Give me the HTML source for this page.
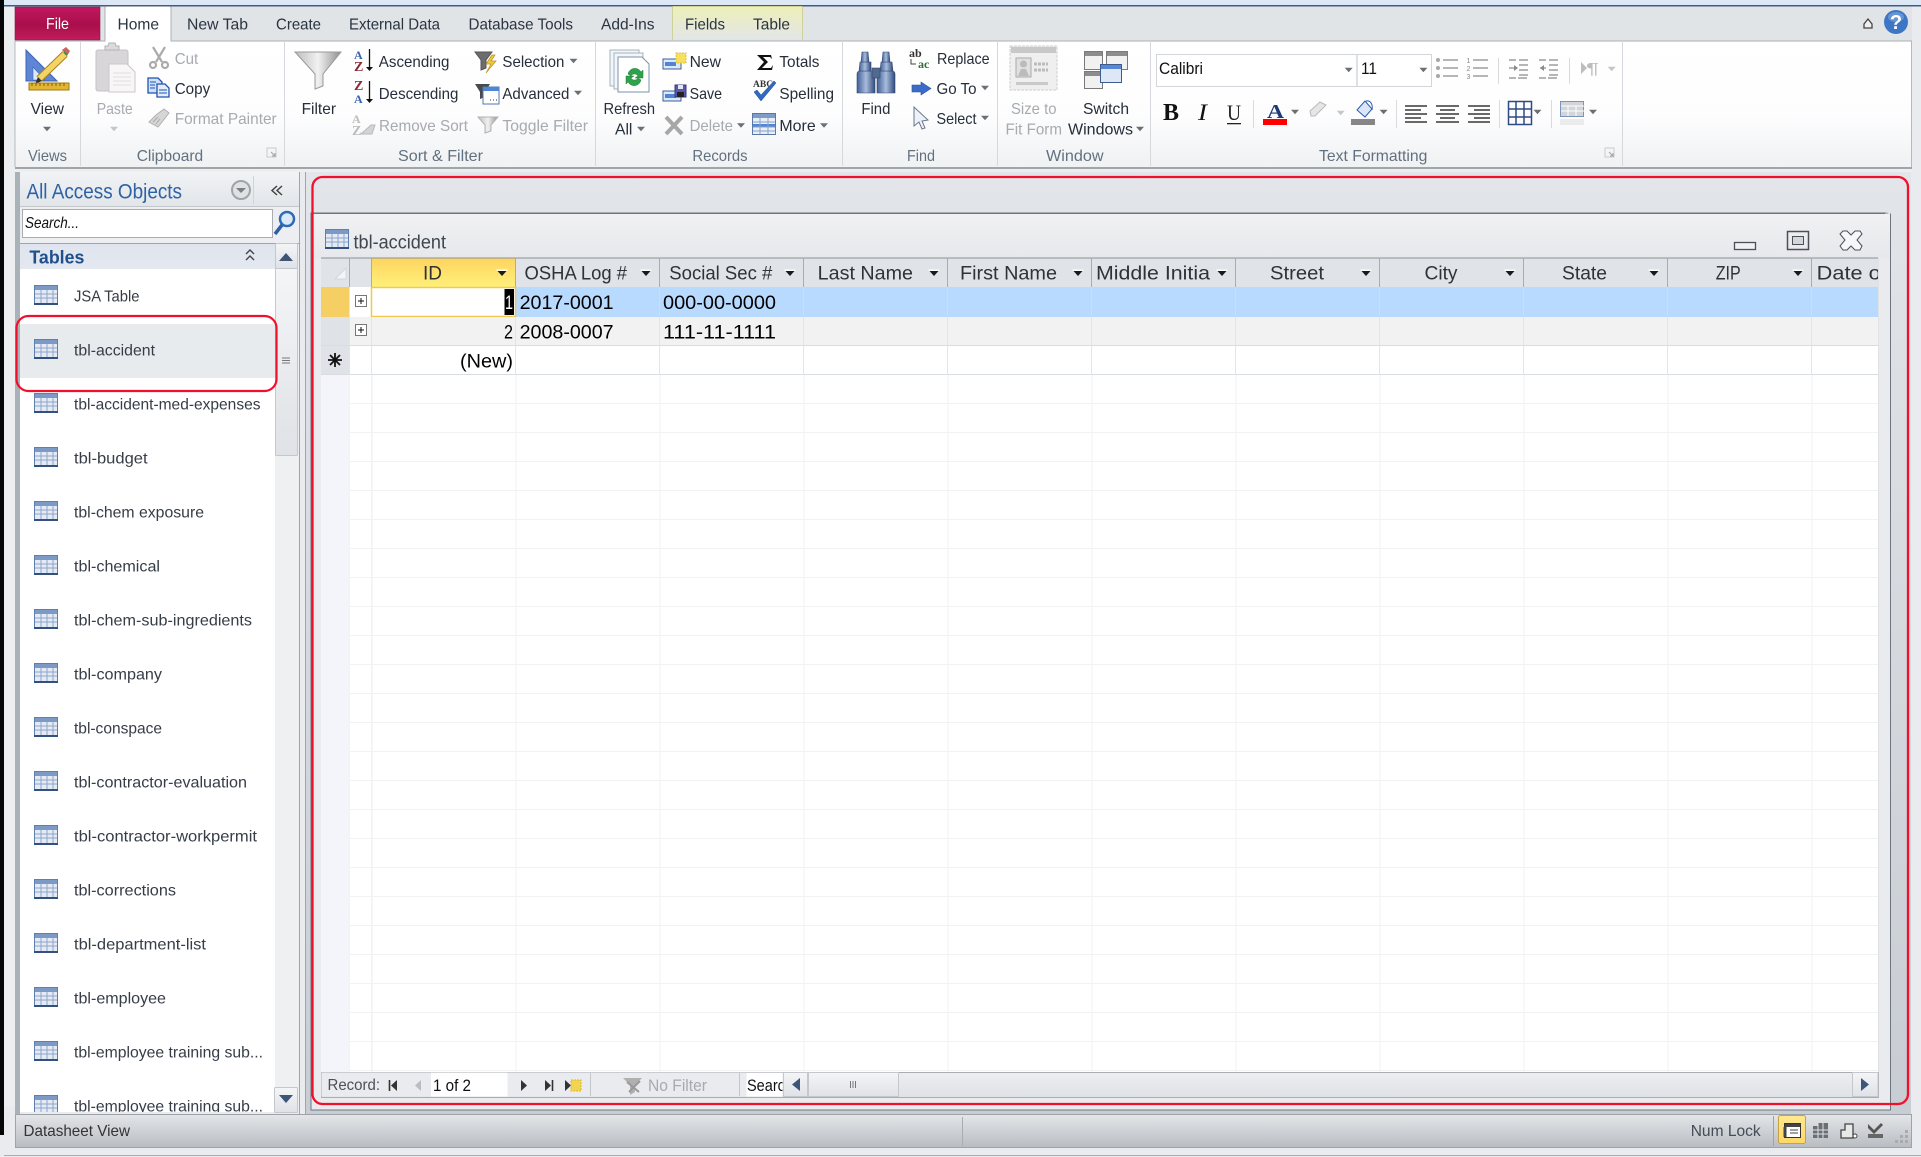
<!DOCTYPE html>
<html><head><meta charset="utf-8"><title>tbl-accident</title>
<style>
html,body{margin:0;padding:0;background:#e9ebee;width:1921px;height:1157px;overflow:hidden}
svg{display:block}
text{font-family:"Liberation Sans",sans-serif;white-space:pre}
.r{font-size:16px;fill:#262e3a}
.g{font-size:16px;fill:#a7aaae}
.l{font-size:16px;fill:#62717f}
.t{font-size:16px;fill:#2a3541}
.n{font-size:16px;fill:#363d47}
.h{font-size:19.5px;fill:#2e3338}
.c{font-size:19.5px;fill:#000}
.s{font-family:"Liberation Serif",serif;font-weight:bold}
</style></head><body>
<svg xmlns="http://www.w3.org/2000/svg" width="1921" height="1157" viewBox="0 0 1921 1157">
<defs>
<linearGradient id="rib" x1="0" y1="0" x2="0" y2="1"><stop offset="0" stop-color="#fff"/><stop offset=".6" stop-color="#fdfdfe"/><stop offset="1" stop-color="#eff1f3"/></linearGradient>
<linearGradient id="file" x1="0" y1="0" x2="0" y2="1"><stop offset="0" stop-color="#c2175e"/><stop offset=".55" stop-color="#a90f4b"/><stop offset="1" stop-color="#c21d5e"/></linearGradient>
<linearGradient id="ctx" x1="0" y1="0" x2="0" y2="1"><stop offset="0" stop-color="#eef0b8"/><stop offset="1" stop-color="#e2e5e8"/></linearGradient>
<linearGradient id="navh" x1="0" y1="0" x2="0" y2="1"><stop offset="0" stop-color="#f1f3f5"/><stop offset="1" stop-color="#e2e5e9"/></linearGradient>
<linearGradient id="tab" x1="0" y1="0" x2="0" y2="1"><stop offset="0" stop-color="#dfe4ee"/><stop offset="1" stop-color="#e4e8f0"/></linearGradient>
<linearGradient id="win" x1="0" y1="0" x2="0" y2="1"><stop offset="0" stop-color="#f0f1f3"/><stop offset="1" stop-color="#e6e8eb"/></linearGradient>
<linearGradient id="idh" x1="0" y1="0" x2="0" y2="1"><stop offset="0" stop-color="#fdd45e"/><stop offset="1" stop-color="#fff07c"/></linearGradient>
<linearGradient id="bg" x1="0" y1="0" x2="0" y2="1"><stop offset="0" stop-color="#e2e5e9"/><stop offset="1" stop-color="#c8cdd3"/></linearGradient>
<linearGradient id="stat" x1="0" y1="0" x2="0" y2="1"><stop offset="0" stop-color="#e3e5e8"/><stop offset="1" stop-color="#b9bdc2"/></linearGradient>
<linearGradient id="nav" x1="0" y1="0" x2="0" y2="1"><stop offset="0" stop-color="#eceef0"/><stop offset="1" stop-color="#dfe2e6"/></linearGradient>
<linearGradient id="btn" x1="0" y1="0" x2="0" y2="1"><stop offset="0" stop-color="#f4f5f7"/><stop offset="1" stop-color="#dfe2e6"/></linearGradient>
<linearGradient id="act" x1="0" y1="0" x2="0" y2="1"><stop offset="0" stop-color="#ffe88e"/><stop offset="1" stop-color="#fdd767"/></linearGradient>
<linearGradient id="fun" x1="0" y1="0" x2="1" y2="0"><stop offset="0" stop-color="#bdbdbd"/><stop offset=".5" stop-color="#f1f1f1"/><stop offset="1" stop-color="#8f8f8f"/></linearGradient>
<linearGradient id="bino" x1="0" y1="0" x2="1" y2="0"><stop offset="0" stop-color="#3f5f96"/><stop offset=".5" stop-color="#a9bcdc"/><stop offset="1" stop-color="#2f4a7c"/></linearGradient>
<pattern id="rows" x="321" y="375" width="1557" height="29" patternUnits="userSpaceOnUse"><path d="M0 28.5H1557" stroke="#f1f2f4" stroke-width="1"/></pattern>
<pattern id="cols" x="371.5" y="0" width="144" height="1157" patternUnits="userSpaceOnUse"><path d="M.5 0V1157" stroke="#f1f2f4" stroke-width="1"/></pattern>
<symbol id="ti" width="24" height="20" viewBox="0 0 24 20" overflow="visible">
<rect x=".5" y=".5" width="23" height="18.5" fill="#e4ebf5" stroke="#5f7fae"/>
<rect x="1" y="1" width="22" height="4" fill="#7d9ac6"/>
<path d="M1 9h22M1 13h22M7 5v14M13 5v14M19 5v14" stroke="#8ea6c9" fill="none"/>
<rect x="0" y="18" width="24" height="2" fill="#34507c"/>
</symbol>
<path id="dn" d="M-4 -2.2h8l-4 4.400z" fill="#6b7077"/>
<path id="dg" d="M-4 -2.2h8l-4 4.400z" fill="#c3c6ca"/>
<g id="ha"><rect x="-5.5" y="-4.5" width="11" height="1.4" fill="#fff"/><path d="M-4.5 -3h9l-4.5 5z" fill="#1a1a1a"/></g>
<g id="rec"><rect x="0" y="0" width="18" height="10" fill="#dfe9f6" stroke="#3a5f9a"/><rect x="2" y="3" width="11" height="4" fill="#4d86d8"/></g>
</defs>

<rect width="1921" height="1157" fill="#e9ebee"/>
<rect x="0" y="0" width="4" height="1135" fill="#050505"/>
<rect x="4" y="0" width="1917" height="5" fill="#dce8f6"/>
<rect x="4" y="5" width="1917" height="1.5" fill="#3d5c88"/>
<rect x="15" y="6.5" width="1897" height="35" fill="#e1e4e7"/>
<rect x="4" y="6.5" width="11" height="1100" fill="#eceef0"/>

<!-- tabs -->
<rect x="15" y="7" width="85" height="33" fill="url(#file)" stroke="#8b1a45" stroke-width=".6"/>
<text x="46" y="29" font-size="16" fill="#fff" textLength="23" lengthAdjust="spacingAndGlyphs">File</text>
<rect x="672.5" y="6.5" width="130" height="34" fill="url(#ctx)"/>
<path d="M672.5 6.5V40M802.5 6.5V40M672.5 6.5H802.5" stroke="#cfd19a" fill="none"/>
<rect x="15" y="41" width="1897" height="126" fill="url(#rib)"/>
<path d="M15 41H1912" stroke="#a9b0b6"/>
<path d="M105 41V8q0-1.500 1.500-1.500H169.500q1.500 0 1.500 1.500V41" fill="#fff" stroke="#a9b0b6"/>
<rect x="105.500" y="39" width="65" height="4" fill="#fff"/>
<path d="M15 41V167M1911.500 41V167" stroke="#b4bac0"/>
<rect x="15" y="167" width="1897" height="2" fill="#a0a5aa"/>
<rect x="15" y="169" width="1897" height="3" fill="#eceef0"/>

<text class="t" x="117.500" y="29.500" textLength="41.500" lengthAdjust="spacingAndGlyphs">Home</text>
<text class="t" x="187" y="29.500" textLength="61" lengthAdjust="spacingAndGlyphs">New Tab</text>
<text class="t" x="276" y="29.500" textLength="45" lengthAdjust="spacingAndGlyphs">Create</text>
<text class="t" x="349" y="29.500" textLength="91" lengthAdjust="spacingAndGlyphs">External Data</text>
<text class="t" x="468.500" y="29.500" textLength="104.500" lengthAdjust="spacingAndGlyphs">Database Tools</text>
<text class="t" x="601" y="29.500" textLength="53.500" lengthAdjust="spacingAndGlyphs">Add-Ins</text>
<text class="t" x="685" y="29.500" textLength="40" lengthAdjust="spacingAndGlyphs">Fields</text>
<text class="t" x="753" y="29.500" textLength="37" lengthAdjust="spacingAndGlyphs">Table</text>

<!-- group separators -->
<path d="M80.500 42V166M284.500 42V166M595.500 42V166M842.500 42V166M997.500 42V166M1150.500 42V166M1622.500 42V166" stroke="#d5d8dc"/>

<!-- ribbon labels -->
<text class="r" x="30.600" y="114" textLength="33.400" lengthAdjust="spacingAndGlyphs">View</text>
<use href="#dn" x="47" y="129"/>
<text class="l" x="28" y="161" textLength="39" lengthAdjust="spacingAndGlyphs">Views</text>
<text class="g" x="96.700" y="114" textLength="36" lengthAdjust="spacingAndGlyphs">Paste</text>
<use href="#dg" x="114" y="129"/>
<text class="g" x="174.700" y="64" textLength="23.500" lengthAdjust="spacingAndGlyphs">Cut</text>
<text class="r" x="174.700" y="94" textLength="35.500" lengthAdjust="spacingAndGlyphs">Copy</text>
<text class="g" x="174.700" y="124" textLength="102" lengthAdjust="spacingAndGlyphs">Format Painter</text>
<text class="l" x="136.700" y="161" textLength="66.500" lengthAdjust="spacingAndGlyphs">Clipboard</text>
<text class="r" x="301.600" y="114" textLength="34.400" lengthAdjust="spacingAndGlyphs">Filter</text>
<text class="r" x="378.800" y="67" textLength="70.600" lengthAdjust="spacingAndGlyphs">Ascending</text>
<text class="r" x="378.800" y="99" textLength="79.600" lengthAdjust="spacingAndGlyphs">Descending</text>
<text class="g" x="379" y="131" textLength="89" lengthAdjust="spacingAndGlyphs">Remove Sort</text>
<text class="r" x="502.400" y="67" textLength="62" lengthAdjust="spacingAndGlyphs">Selection</text>
<use href="#dn" x="573.500" y="61"/>
<text class="r" x="502.400" y="99" textLength="67" lengthAdjust="spacingAndGlyphs">Advanced</text>
<use href="#dn" x="578" y="93"/>
<text class="g" x="502.400" y="131" textLength="85.600" lengthAdjust="spacingAndGlyphs">Toggle Filter</text>
<text class="l" x="398" y="161" textLength="85" lengthAdjust="spacingAndGlyphs">Sort &amp; Filter</text>
<text class="r" x="603.500" y="114" textLength="51.500" lengthAdjust="spacingAndGlyphs">Refresh</text>
<text class="r" x="615" y="134.500" textLength="17.400" lengthAdjust="spacingAndGlyphs">All</text>
<use href="#dn" x="641" y="129"/>
<text class="r" x="689.600" y="67" textLength="31.400" lengthAdjust="spacingAndGlyphs">New</text>
<text class="r" x="689.600" y="99" textLength="32.400" lengthAdjust="spacingAndGlyphs">Save</text>
<text class="g" x="689.600" y="131" textLength="43.400" lengthAdjust="spacingAndGlyphs">Delete</text>
<use href="#dn" x="741" y="125.500"/>
<text class="r" x="779.400" y="67" textLength="40" lengthAdjust="spacingAndGlyphs">Totals</text>
<text class="r" x="779.400" y="99" textLength="54.600" lengthAdjust="spacingAndGlyphs">Spelling</text>
<text class="r" x="779.400" y="131" textLength="36.300" lengthAdjust="spacingAndGlyphs">More</text>
<use href="#dn" x="824" y="125.500"/>
<text class="l" x="692.400" y="161" textLength="55.200" lengthAdjust="spacingAndGlyphs">Records</text>
<text class="r" x="861.400" y="114" textLength="29" lengthAdjust="spacingAndGlyphs">Find</text>
<text class="r" x="937" y="64" textLength="52.600" lengthAdjust="spacingAndGlyphs">Replace</text>
<text class="r" x="936.500" y="94" textLength="40" lengthAdjust="spacingAndGlyphs">Go To</text>
<use href="#dn" x="985" y="88"/>
<text class="r" x="936.500" y="124" textLength="40" lengthAdjust="spacingAndGlyphs">Select</text>
<use href="#dn" x="985" y="118"/>
<text class="l" x="907" y="161" textLength="28" lengthAdjust="spacingAndGlyphs">Find</text>
<text class="g" x="1011" y="114" textLength="45.500" lengthAdjust="spacingAndGlyphs">Size to</text>
<text class="g" x="1005.500" y="134.500" textLength="56.500" lengthAdjust="spacingAndGlyphs">Fit Form</text>
<text class="r" x="1083" y="114" textLength="46" lengthAdjust="spacingAndGlyphs">Switch</text>
<text class="r" x="1068" y="134.500" textLength="65" lengthAdjust="spacingAndGlyphs">Windows</text>
<use href="#dn" x="1140" y="129"/>
<text class="l" x="1046" y="161" textLength="57.500" lengthAdjust="spacingAndGlyphs">Window</text>
<text class="l" x="1319" y="161" textLength="108.400" lengthAdjust="spacingAndGlyphs">Text Formatting</text>

<!-- launchers -->
<g fill="none" stroke="#9aa3ad"><path d="M267 148h9v9h-9z" stroke="#c8ccd0"/><path d="M271 152l4 4M275 153v3h-3"/><path d="M1605 148h9v9h-9z" stroke="#c8ccd0"/><path d="M1609 152l4 4M1613 153v3h-3"/></g>

<!-- View icon -->
<path d="M26 50L57 81H26z" fill="#5f86d6" stroke="#3c64b4"/><path d="M33 67L45 80H33z" fill="#dfe8f8" stroke="#3c64b4" stroke-width=".6"/>
<path d="M39 79L65 54" stroke="#a8801e" stroke-width="7.500"/><path d="M39 79L65 54" stroke="#f3d566" stroke-width="5.500"/>
<path d="M62 50l4-3 4 4-3 5z" fill="#c9655f"/><path d="M64 52l3 3" stroke="#3f8f55" stroke-width="2"/><path d="M35 84l3-7 4 4z" fill="#333"/>
<rect x="29" y="83" width="40" height="7" fill="#e3b530" stroke="#9c7a1a"/><path d="M32 83v3M36 83v3M40 83v3M44 83v3M48 83v3M52 83v3M56 83v3M60 83v3M64 83v3" stroke="#7b6010"/>

<!-- Paste -->
<rect x="96" y="50" width="32" height="41" rx="2" fill="#d9d6d9" stroke="#c5c3c6"/>
<path d="M105 50v-4h3l1-3h6l1 3h3v4z" fill="#dcdadb" stroke="#b3b1b3"/>
<path d="M109 64h18l8 8v20h-26z" fill="#f8f6f6" stroke="#cac8c9"/>
<path d="M113 73h18M113 77h18M113 81h18M113 85h18" stroke="#dfdddd"/>
<!-- Cut -->
<g fill="none" stroke="#ababab" stroke-width="2.200"><path d="M153 47l9 15M165 47l-9 15"/><circle cx="153" cy="65" r="3"/><circle cx="165" cy="65" r="3"/></g>
<!-- Copy -->
<path d="M148 78h10l4 4v11h-14z" fill="#cfe0f8" stroke="#1f52b0" stroke-width="1.300"/><path d="M157 84h8l4 4v9h-12z" fill="#e3edfb" stroke="#1f52b0" stroke-width="1.300"/><path d="M150 82h6M150 85h5M150 88h5M159 90h8M159 93h8" stroke="#1f52b0"/>
<!-- Format painter -->
<path d="M164 109l5 4-7 9-4 5-9-5 7-7z" fill="#d6d6d6" stroke="#b0b0b0"/><path d="M153 122l5-5M156 124l4-5" stroke="#aaa"/>

<!-- Filter -->
<path d="M295 52H341L323 74V86L315 89V74z" fill="url(#fun)" stroke="#9a9a9a"/>

<!-- Ascending -->
<text x="354" y="59" font-size="12" class="s" style="fill:#3a62b0">A</text><text x="354" y="71" font-size="14" class="s" style="fill:#8a2a35">Z</text>
<path d="M369.500 49V69" stroke="#111" stroke-width="1.300"/><path d="M366 67h7l-3.500 4z" fill="#111"/>
<text x="354" y="90" font-size="14" class="s" style="fill:#8a2a35">Z</text><text x="354" y="103" font-size="12" class="s" style="fill:#3a62b0">A</text>
<path d="M369.500 81V101" stroke="#111" stroke-width="1.300"/><path d="M366 99h7l-3.500 4z" fill="#111"/>
<text x="352" y="123" font-size="12" class="s" style="fill:#bcbcbc">A</text><text x="352" y="135" font-size="14" class="s" style="fill:#bcbcbc">Z</text>
<path d="M361 134l10-9h4l-3 9z" fill="#d4d4d4" stroke="#b9b9b9"/>
<!-- Selection / Advanced -->
<path d="M475 52H492L486 60V68L481 70V60z" fill="#6d6d6d" stroke="#555"/>
<path d="M492 55l-6 9h5l-5 9 10-12h-5l4-6z" fill="#f3c93a" stroke="#b98f1e" stroke-width=".7"/>
<path d="M475 84H490L485 92V97L480 99V92z" fill="#4a4a4a"/>
<rect x="483" y="87" width="16" height="17" fill="#fff" stroke="#5177b5"/><rect x="483" y="87" width="16" height="4" fill="#4d86d8"/><path d="M490 100h1M493 100h1M496 100h1" stroke="#333"/>
<path d="M478 117H498L491 125V131L485 133V125z" fill="url(#fun)" stroke="#b3b3b3"/>

<!-- Refresh -->
<g stroke="#a6b2c0" fill="#f2f5f9"><rect x="610" y="50" width="29" height="36"/><rect x="614" y="53" width="29" height="36"/><path d="M618 57h24l7 7v28h-31z" fill="#fff" stroke="#7f92a8"/></g>
<path d="M628 74a7 7 0 0 1 13-2l2-2v8h-8l3-2a4 4 0 0 0-7 0zM641 80a7 7 0 0 1-13 2l-2 2v-8h8l-3 2a4 4 0 0 0 7 0z" fill="#2fa24c" stroke="#1f7a35" stroke-width=".5"/>

<!-- Records -->
<use href="#rec" x="663" y="59"/><rect x="676" y="53" width="10" height="10" fill="#f6e05e" stroke="#dfc53c" stroke-dasharray="2 1"/>
<use href="#rec" x="663" y="91"/><rect x="675" y="85" width="11" height="12" fill="#5b58a8" stroke="#3a3880"/><rect x="678" y="85" width="5" height="4" fill="#e6e6f2"/><rect x="677" y="92" width="7" height="5" fill="#222"/>
<path d="M666 117l16 17M682 117l-16 17" stroke="#a7a7a7" stroke-width="4"/>
<path d="M757 55h14l1 4-2-2h-7l5 5-6 6h9l2-3-1 5h-15l7-8z" fill="#111"/>
<text x="753" y="87" font-size="9.500" class="s" style="fill:#333">ABC</text>
<path d="M757 90l4 5 13-14 2 2-15 18-7-9z" fill="#3168c0" stroke="#1e4a96" stroke-width=".5"/>
<rect x="752.500" y="113.500" width="23" height="21" fill="#e8eff8" stroke="#5b79a8"/><rect x="753" y="114" width="22" height="4" fill="#7f9cc8"/><rect x="753" y="124" width="22" height="3" fill="#4f86da"/><path d="M753 122h22M753 127h22M753 131h22M760 118v16M768 118v16" stroke="#8ba2c5"/>

<!-- Find -->
<g stroke="#33496f" stroke-width=".6"><path d="M857 74q0-3 3-3h12q3 0 3 3v19h-18z" fill="url(#bino)"/><path d="M877 74q0-3 3-3h12q3 0 3 3v19h-18z" fill="url(#bino)"/><path d="M860 62h11v9h-12z" fill="url(#bino)"/><path d="M881 62h11l1 9h-13z" fill="url(#bino)"/><path d="M862 52h6l1 10h-8z" fill="url(#bino)"/><path d="M883 52h6l1 10h-8z" fill="url(#bino)"/><rect x="872" y="68" width="8" height="10" fill="#51688f"/></g>
<text x="909" y="57" font-size="12" class="s" style="fill:#333">ab</text><text x="918" y="68" font-size="12" class="s" style="fill:#2f6e35">ac</text><path d="M911 59v5h5" fill="none" stroke="#444"/>
<path d="M912 85h9v-3l10 6.500-10 6.500v-3h-9z" fill="#3a6dca" stroke="#2a4f96" stroke-width=".6"/>
<path d="M914 107v19l5-4 3 7 3-1-3-7 6-1z" fill="#eef2f8" stroke="#67788e"/>

<!-- Size to fit -->
<rect x="1010" y="46" width="47" height="44" fill="#efefef" stroke="#cfcfcf" stroke-dasharray="3 1"/><rect x="1011" y="47" width="45" height="6" fill="#c8c8c8"/>
<rect x="1016" y="58" width="15" height="19" fill="#e0e0e0" stroke="#aaa"/><circle cx="1023.500" cy="64" r="3.500" fill="#bbb"/><path d="M1018 76l3-7h5l3 7z" fill="#bbb"/><path d="M1034 64h14M1034 70h14" stroke="#bbb" stroke-width="3" stroke-dasharray="3 1"/><rect x="1016" y="82" width="32" height="3" fill="#c9c9c9"/>
<!-- Switch windows -->
<rect x="1084.500" y="51.500" width="18" height="18" fill="#f1f1f1" stroke="#7a7a7a"/><rect x="1085" y="52" width="17" height="4" fill="#8d8d8d"/>
<rect x="1106.500" y="51.500" width="21" height="18" fill="#f1f1f1" stroke="#7a7a7a"/><rect x="1107" y="52" width="20" height="4" fill="#8d8d8d"/>
<rect x="1084.500" y="71.500" width="18" height="17" fill="#f1f1f1" stroke="#7a7a7a"/><rect x="1085" y="72" width="17" height="4" fill="#8d8d8d"/>
<rect x="1100.500" y="64.500" width="21" height="18" fill="#dde7f6" stroke="#3e5c8e"/><rect x="1101" y="65" width="20" height="4" fill="#5788d6"/>

<!-- Font boxes -->
<rect x="1156.500" y="54.500" width="275" height="32" fill="#fff" stroke="#d2d5d9"/><path d="M1357 54v33" stroke="#d2d5d9" stroke-width="1.500"/>
<text x="1159" y="74" font-size="17" fill="#111" textLength="44" lengthAdjust="spacingAndGlyphs">Calibri</text>
<text x="1361" y="74" font-size="17" fill="#111" textLength="16" lengthAdjust="spacingAndGlyphs">11</text>
<use href="#dn" x="1348.700" y="70"/><use href="#dn" x="1423.400" y="70"/>
<!-- lists -->
<g stroke="#8a8a8a" stroke-width="1.300"><path d="M1443 60h15M1443 68h15M1443 76h15M1473 60h15M1473 68h15M1473 76h15"/></g>
<g fill="#a7a7a7"><circle cx="1438" cy="60" r="2"/><circle cx="1438" cy="68" r="2"/><circle cx="1438" cy="76" r="2"/></g>
<text x="1466.500" y="63" font-size="7" fill="#888">1</text><text x="1466.500" y="71" font-size="7" fill="#888">2</text><text x="1466.500" y="79" font-size="7" fill="#888">3</text>
<path d="M1498.500 58V84M1569.500 58V84" stroke="#d8dadd"/>
<g stroke="#8a8a8a" stroke-width="1.200"><path d="M1509 60h7M1519 60h9M1519 65h9M1519 70h9M1519 75h9M1509 78h7M1518 78h9M1539 60h7M1549 60h9M1549 65h9M1549 70h9M1549 75h9M1539 78h7M1548 78h9"/><path d="M1509 68h6"/><path d="M1540 68h6"/></g>
<path d="M1514 65l4 3-4 3zM1544 65l-4 3 4 3z" fill="#8a8a8a"/>
<path d="M1581 62l6 6-6 6z" fill="#bcbcbc"/><text x="1586" y="74" font-size="16" fill="#bcbcbc" textLength="13" lengthAdjust="spacingAndGlyphs">¶</text><use href="#dg" x="1611.700" y="69"/>

<!-- Format row -->
<text x="1163" y="120" font-size="24" class="s" style="fill:#111" textLength="16" lengthAdjust="spacingAndGlyphs">B</text>
<text x="1198" y="120" font-size="23" style="font-family:'Liberation Serif',serif;font-style:italic;fill:#111" textLength="9" lengthAdjust="spacingAndGlyphs">I</text>
<text x="1227" y="120" font-size="22" style="font-family:'Liberation Serif',serif;fill:#222" textLength="14" lengthAdjust="spacingAndGlyphs">U</text>
<rect x="1227" y="123" width="14" height="1.300" fill="#222"/>
<path d="M1253.500 100V128M1396.500 100V128M1499.500 100V128M1551.500 100V128" stroke="#d8dadd"/>
<text x="1267" y="118" font-size="20" class="s" style="fill:#1f3a7a" textLength="17" lengthAdjust="spacingAndGlyphs">A</text>
<rect x="1263" y="119" width="24" height="6" fill="#f00"/>
<use href="#dn" x="1295" y="112"/>
<path d="M1310 111l10-9 6 3-11 11h-4z" fill="#e6e6e6" stroke="#b9b9b9"/><use href="#dg" x="1340.700" y="113"/>
<path d="M1357 110l8-9 7 8-7 8z" fill="#dbe7f7" stroke="#2b5bb0"/><path d="M1366 101c5-1 7 4 6 9" fill="none" stroke="#2b5bb0"/><rect x="1351" y="119" width="24" height="6" fill="#868686"/>
<use href="#dn" x="1383.600" y="112"/>
<g stroke="#111" stroke-width="1.300"><path d="M1405 106h22M1405 110h16M1405 114h22M1405 118h16M1405 122h22"/><path d="M1436 106h23M1440 110h15M1436 114h23M1440 118h15M1436 122h23"/><path d="M1468 106h22M1474 110h16M1468 114h22M1474 118h16M1468 122h22"/></g>
<g fill="none" stroke="#2f4a85" stroke-width="1.500"><rect x="1508.500" y="101.500" width="23" height="23"/><path d="M1516 101v24M1524 101v24M1508 109h24M1508 117h24"/></g>
<use href="#dn" x="1537.500" y="112"/>
<rect x="1560.500" y="101.500" width="23" height="15" fill="#d2d5da" stroke="#7a94bd"/><path d="M1561 106h23M1561 111h23" stroke="#fff"/><path d="M1568 106v10M1576 106v10" stroke="#fff"/><rect x="1560" y="119" width="24" height="6" fill="#ececec"/>
<use href="#dn" x="1593" y="112"/>

<!-- top right -->
<path d="M1864 28v-4l4-5 4 5v4z" fill="#f0f0f0" stroke="#444" stroke-width="1.300"/>
<ellipse cx="1896" cy="22" rx="12" ry="12" fill="#3c76c4"/><ellipse cx="1896" cy="17" rx="8" ry="5" fill="#7fa9df" opacity=".6"/>
<text x="1896" y="29" font-size="20" font-weight="bold" fill="#fff" text-anchor="middle">?</text>

<!-- Main area -->
<rect x="15" y="172" width="5" height="943" fill="#a9b1b9"/>
<rect x="299" y="172" width="7" height="943" fill="#e9ebee"/>
<path d="M299.500 172V1114M305.500 172V1114" stroke="#9fa5ab"/>
<rect x="306" y="172" width="1605" height="943" fill="url(#bg)"/>

<!-- Nav pane -->
<rect x="20" y="172" width="279" height="35" fill="url(#navh)"/>
<text x="26.500" y="198.500" font-size="21" fill="#2e62a5" textLength="155.500" lengthAdjust="spacingAndGlyphs">All Access Objects</text>
<circle cx="241" cy="190" r="9" fill="#dfe1e3" stroke="#9ea4aa" stroke-width="2"/><path d="M236 188h10l-5 5z" fill="#7b7f84"/>
<path d="M253.500 176V204" stroke="#d0d3d7"/>
<path d="M277 186l-5 4.500 5 4.500M282 186l-5 4.500 5 4.500" fill="none" stroke="#444" stroke-width="1.500"/>
<rect x="20" y="206" width="279" height="38" fill="#eceef1"/>
<path d="M20 206.500H299" stroke="#c3c7cc"/>
<rect x="22.500" y="209.500" width="250" height="28" fill="#fff" stroke="#a9adb2"/>
<text x="25" y="228" font-size="16" font-style="italic" fill="#111" textLength="54" lengthAdjust="spacingAndGlyphs">Search...</text>
<circle cx="287" cy="219" r="7" fill="#dbe8f7" stroke="#2d6bb5" stroke-width="2.500"/><path d="M282 225l-7 9" stroke="#2d5fa5" stroke-width="3.500"/>
<rect x="20" y="244" width="279" height="868" fill="#eceef0"/>
<rect x="20" y="244" width="255" height="25" fill="url(#tab)"/>
<path d="M20 243.500H299" stroke="#9ea4aa"/>
<text x="29.400" y="263.500" font-size="18" font-weight="bold" fill="#1f4f8c" textLength="55" lengthAdjust="spacingAndGlyphs">Tables</text>
<path d="M246 254l4-4 4 4M246 260l4-4 4 4" fill="none" stroke="#444" stroke-width="1.400"/>
<rect x="20" y="269" width="255" height="843" fill="#fff"/>
<rect x="20" y="324" width="255" height="54" fill="#e8ebee"/>
<!-- nav scrollbar -->
<rect x="275" y="244" width="23" height="868" fill="#eef0f2"/>
<rect x="275.500" y="243.500" width="22" height="25" fill="url(#btn)" stroke="#c4c8cc" rx="1"/><path d="M279 261h14l-7-8z" fill="#3e5478"/>
<rect x="275.500" y="268.500" width="22" height="187" fill="url(#btn)" stroke="#c4c8cc" rx="1"/>
<path d="M282 358h8M282 360.500h8M282 363h8" stroke="#777"/>
<rect x="274.500" y="1087.500" width="23" height="25" fill="url(#btn)" stroke="#c4c8cc" rx="1"/><path d="M279 1095h14l-7 8z" fill="#3e5478"/>

<clipPath id="ncl"><rect x="20" y="269" width="255" height="843"/></clipPath>
<g clip-path="url(#ncl)">
<use href="#ti" x="34" y="285"/><text class="n" x="74" y="301.500" textLength="65.500" lengthAdjust="spacingAndGlyphs">JSA Table</text>
<use href="#ti" x="34" y="339"/><text class="n" x="74" y="355.500" textLength="81" lengthAdjust="spacingAndGlyphs">tbl-accident</text>
<use href="#ti" x="34" y="393"/><text class="n" x="74" y="409.500" textLength="186.500" lengthAdjust="spacingAndGlyphs">tbl-accident-med-expenses</text>
<use href="#ti" x="34" y="447"/><text class="n" x="74" y="463.500" textLength="73.600" lengthAdjust="spacingAndGlyphs">tbl-budget</text>
<use href="#ti" x="34" y="501"/><text class="n" x="74" y="517.500" textLength="130" lengthAdjust="spacingAndGlyphs">tbl-chem exposure</text>
<use href="#ti" x="34" y="555"/><text class="n" x="74" y="571.500" textLength="86" lengthAdjust="spacingAndGlyphs">tbl-chemical</text>
<use href="#ti" x="34" y="609"/><text class="n" x="74" y="625.500" textLength="178" lengthAdjust="spacingAndGlyphs">tbl-chem-sub-ingredients</text>
<use href="#ti" x="34" y="663"/><text class="n" x="74" y="679.500" textLength="88" lengthAdjust="spacingAndGlyphs">tbl-company</text>
<use href="#ti" x="34" y="717"/><text class="n" x="74" y="733.500" textLength="88" lengthAdjust="spacingAndGlyphs">tbl-conspace</text>
<use href="#ti" x="34" y="771"/><text class="n" x="74" y="787.500" textLength="173" lengthAdjust="spacingAndGlyphs">tbl-contractor-evaluation</text>
<use href="#ti" x="34" y="825"/><text class="n" x="74" y="841.500" textLength="183" lengthAdjust="spacingAndGlyphs">tbl-contractor-workpermit</text>
<use href="#ti" x="34" y="879"/><text class="n" x="74" y="895.500" textLength="102" lengthAdjust="spacingAndGlyphs">tbl-corrections</text>
<use href="#ti" x="34" y="933"/><text class="n" x="74" y="949.500" textLength="132" lengthAdjust="spacingAndGlyphs">tbl-department-list</text>
<use href="#ti" x="34" y="987"/><text class="n" x="74" y="1003.500" textLength="92" lengthAdjust="spacingAndGlyphs">tbl-employee</text>
<use href="#ti" x="34" y="1041"/><text class="n" x="74" y="1057.500" textLength="189" lengthAdjust="spacingAndGlyphs">tbl-employee training sub...</text>
<use href="#ti" x="34" y="1095"/><text class="n" x="74" y="1111.500" textLength="189" lengthAdjust="spacingAndGlyphs">tbl-employee training sub...</text>
</g>

<!-- Child window -->
<path d="M311 1110V213H1885q5.500 0 5.500 5.500V1110z" fill="#e9ebee" stroke="#6e7580"/>
<rect x="311.500" y="213.500" width="1578.500" height="45" fill="url(#win)"/>
<path d="M311 213.500H1885" stroke="#6e7580"/>
<path d="M1890.500 222V213.500" stroke="#6e7580"/>
<use href="#ti" x="325" y="229"/>
<text x="353.500" y="248.500" font-size="19" fill="#3e4650" textLength="92.500" lengthAdjust="spacingAndGlyphs">tbl-accident</text>
<rect x="1734.500" y="242.500" width="21" height="7" fill="#eef0f5" stroke="#4a4f58" stroke-width="1.300"/>
<rect x="1787.500" y="231.500" width="21" height="18" fill="none" stroke="#4a4f58" stroke-width="1.500"/><rect x="1792.500" y="236.500" width="11" height="8" fill="#d3d6da" stroke="#4a4f58"/>
<path d="M1843 231h4l4 4 4-4h5l2 3-5 6 5 6-2 4h-5l-4-4-4 4h-4l-3-4 5-6-5-6z" fill="#f6f7f9" stroke="#4a4f58"/>

<!-- Datasheet -->
<rect x="321" y="258" width="1557.500" height="814" fill="#fff"/>
<rect x="321" y="375" width="1557.500" height="697" fill="url(#rows)"/>
<rect x="350" y="375" width="1528.500" height="697" fill="url(#cols)"/>
<rect x="321" y="375" width="29" height="697" fill="#f4f5fb"/>
<path d="M349.500 375V1072M371.500 375V1072" stroke="#f1f2f4"/>
<!-- header -->
<rect x="321" y="258" width="1557.500" height="29.500" fill="#e0e3e7"/>
<rect x="371.500" y="258" width="144" height="29.500" fill="url(#idh)"/>
<path d="M321 258H1878" stroke="#8c9197"/>
<path d="M338 280h11v-11z" fill="#f4f5f7" stroke="#d4d7db" transform="translate(-3 -1)"/>
<path d="M349.500 258V287M371.500 258V287M515.500 258V287M659.500 258V287M803.500 258V287M947.500 258V287M1091.500 258V287M1235.500 258V287M1379.500 258V287M1523.500 258V287M1667.500 258V287M1811.500 258V287" stroke="#a9adb3"/>
<text class="h" x="423" y="279.500" textLength="19" lengthAdjust="spacingAndGlyphs">ID</text>
<text class="h" x="524.500" y="279.500" textLength="102.500" lengthAdjust="spacingAndGlyphs">OSHA Log #</text>
<text class="h" x="669.300" y="279.500" textLength="103" lengthAdjust="spacingAndGlyphs">Social Sec #</text>
<text class="h" x="817.700" y="279.500" textLength="95.300" lengthAdjust="spacingAndGlyphs">Last Name</text>
<text class="h" x="960" y="279.500" textLength="97" lengthAdjust="spacingAndGlyphs">First Name</text>
<text class="h" x="1096" y="279.500" textLength="114" lengthAdjust="spacingAndGlyphs">Middle Initia</text>
<text class="h" x="1270" y="279.500" textLength="54" lengthAdjust="spacingAndGlyphs">Street</text>
<text class="h" x="1424.500" y="279.500" textLength="33" lengthAdjust="spacingAndGlyphs">City</text>
<text class="h" x="1562" y="279.500" textLength="45" lengthAdjust="spacingAndGlyphs">State</text>
<text class="h" x="1715.700" y="279.500" textLength="25" lengthAdjust="spacingAndGlyphs">ZIP</text>
<clipPath id="dcl"><rect x="1812" y="258" width="66.500" height="30"/></clipPath>
<g clip-path="url(#dcl)"><text class="h" x="1816.700" y="279.500" textLength="70" lengthAdjust="spacingAndGlyphs">Date of</text></g>
<use href="#ha" x="502" y="274"/><use href="#ha" x="646" y="274"/><use href="#ha" x="790" y="274"/><use href="#ha" x="934" y="274"/><use href="#ha" x="1078" y="274"/><use href="#ha" x="1222" y="274"/><use href="#ha" x="1366" y="274"/><use href="#ha" x="1510" y="274"/><use href="#ha" x="1654" y="274"/><use href="#ha" x="1798" y="274"/>
<!-- rows -->
<rect x="321" y="287" width="28.500" height="30" fill="#f6cf64"/>
<rect x="349.500" y="287" width="22" height="30" fill="#fff"/>
<rect x="515.500" y="287" width="1363" height="30" fill="#b8daff"/>
<rect x="371.500" y="287.500" width="144" height="29" fill="#fff" stroke="#f0c94f" stroke-width="1.500"/>
<path d="M659.500 287V317M803.500 287V317M947.500 287V317M1091.500 287V317M1235.500 287V317M1379.500 287V317M1523.500 287V317M1667.500 287V317M1811.500 287V317" stroke="#c6def8"/>
<rect x="321" y="317" width="28.500" height="29" fill="#dfe3e8"/>
<rect x="349.500" y="317" width="22" height="29" fill="#f2f2f2"/>
<rect x="371.500" y="317" width="1507" height="29" fill="#f2f2f2"/>
<rect x="321" y="346" width="28.500" height="29" fill="#dfe3e8"/>
<path d="M321 345.500H1878M321 374.500H1878" stroke="#d8dde2"/>
<path d="M349.500 317V375M371.500 317V375M515.500 317V375M659.500 317V375M803.500 317V375M947.500 317V375M1091.500 317V375M1235.500 317V375M1379.500 317V375M1523.500 317V375M1667.500 317V375M1811.500 317V375" stroke="#e2e5e8"/>
<rect x="355.500" y="295.500" width="11" height="11" fill="#fff" stroke="#777"/><path d="M358 301h6M361 298v6" stroke="#111"/>
<rect x="355.500" y="324.500" width="11" height="11" fill="#fff" stroke="#777"/><path d="M358 330h6M361 327v6" stroke="#111"/>
<rect x="504.500" y="289" width="9.500" height="26" fill="#000"/>
<text class="c" x="505" y="309" style="fill:#fff" textLength="8" lengthAdjust="spacingAndGlyphs">1</text>
<text class="c" x="519.600" y="309" textLength="94" lengthAdjust="spacingAndGlyphs">2017-0001</text>
<text class="c" x="663" y="309" textLength="113" lengthAdjust="spacingAndGlyphs">000-00-0000</text>
<text class="c" x="504" y="338.500" textLength="9" lengthAdjust="spacingAndGlyphs">2</text>
<text class="c" x="519.600" y="338.500" textLength="94" lengthAdjust="spacingAndGlyphs">2008-0007</text>
<text class="c" x="663" y="338.500" textLength="113" lengthAdjust="spacingAndGlyphs">111-11-1111</text>
<text class="c" x="460" y="367.500" textLength="53" lengthAdjust="spacingAndGlyphs">(New)</text>
<path d="M335 353v14M328 360h14M330 355l10 10M340 355l-10 10" stroke="#111" stroke-width="1.800"/>
<path d="M1878.500 258V1072" stroke="#dfe2e5"/>

<!-- Record nav -->
<rect x="321.500" y="1072.500" width="1557" height="25" fill="url(#nav)" stroke="#a9adb3"/>
<rect x="321.500" y="1072.500" width="461" height="24" fill="#e9ebee"/>
<text x="327.500" y="1090" font-size="16" fill="#4a5058" textLength="52.500" lengthAdjust="spacingAndGlyphs">Record:</text>
<path d="M389.500 1080V1091" stroke="#333" stroke-width="1.600"/><path d="M397 1080v11l-6-5.500z" fill="#333"/>
<path d="M421 1080v11l-6-5.500z" fill="#b9bcc0"/>
<rect x="431" y="1072.500" width="76.500" height="24" fill="#fff"/>
<text x="433" y="1091" font-size="17" fill="#111" textLength="38" lengthAdjust="spacingAndGlyphs">1 of 2</text>
<path d="M521 1080v11l6-5.500z" fill="#333"/>
<path d="M545 1080v11l6-5.500z" fill="#333"/><path d="M552.500 1080V1091" stroke="#333" stroke-width="1.600"/>
<path d="M565 1080v11l6-5.500z" fill="#333"/><rect x="571" y="1080" width="10" height="11" fill="#f1d44f" stroke="#d7b93a" stroke-dasharray="2 1"/>
<path d="M590.500 1073V1096" stroke="#c4c7cb"/>
<path d="M623 1078h19l-7 7v7l-5 3v-10z" fill="#b0b0b0"/><path d="M627 1082l12 10M640 1081l-11 11" stroke="#999" stroke-width="2"/>
<text x="648" y="1091" font-size="16.500" fill="#a7aaae" textLength="59" lengthAdjust="spacingAndGlyphs">No Filter</text>
<path d="M739.500 1073V1096" stroke="#c4c7cb"/>
<rect x="746.500" y="1073" width="36" height="23.500" fill="#fff"/>
<clipPath id="scl"><rect x="746.500" y="1073" width="36" height="24"/></clipPath>
<g clip-path="url(#scl)"><text x="747" y="1091" font-size="17" fill="#111" textLength="46" lengthAdjust="spacingAndGlyphs">Search</text></g>
<rect x="783.500" y="1072.500" width="24" height="24" fill="url(#btn)" stroke="#c4c8cc"/><path d="M800 1078v13l-8-6.500z" fill="#3e5478"/>
<rect x="808.500" y="1072.500" width="90" height="24" fill="url(#btn)" stroke="#c4c8cc"/>
<path d="M850.500 1081v7M853 1081v7M855.500 1081v7" stroke="#777"/>
<rect x="1852.500" y="1072.500" width="25.500" height="24" fill="url(#btn)" stroke="#c4c8cc"/><path d="M1861 1078v13l8-6.500z" fill="#3e5478"/>

<!-- Red highlights -->
<rect x="312.500" y="177" width="1595.500" height="927" rx="10" fill="none" stroke="#f0102c" stroke-width="2.300"/>
<rect x="16.500" y="316" width="260" height="75" rx="12" fill="none" stroke="#f0102c" stroke-width="2.200"/>

<!-- Status bar -->
<rect x="15" y="1115" width="1897" height="32" fill="url(#stat)"/>
<path d="M15 1114.500H1912M15 1147.500H1912M15.500 1115V1147M1911.500 1115V1147" stroke="#9ea3a8"/>
<rect x="0" y="1148" width="1921" height="7" fill="#e9ebee"/>
<path d="M4 1155.500H1921" stroke="#a9adb2"/>
<text x="23.500" y="1136" font-size="16" fill="#333" textLength="106.500" lengthAdjust="spacingAndGlyphs">Datasheet View</text>
<path d="M962.500 1117V1146" stroke="#a9adb2"/>
<text x="1690.700" y="1136" font-size="16" fill="#444c58" textLength="70" lengthAdjust="spacingAndGlyphs">Num Lock</text>
<path d="M1773.500 1116V1146" stroke="#9ea3a8"/>
<rect x="1778.500" y="1115.500" width="27" height="28" rx="2" fill="url(#act)" stroke="#c9a23c"/>
<rect x="1784.500" y="1123.500" width="16" height="14" fill="#fff" stroke="#333"/><rect x="1785" y="1124" width="15" height="3" fill="#444"/><path d="M1785 1127v10" stroke="#444" stroke-width="3"/><path d="M1790 1130h8M1790 1133h8" stroke="#444"/>
<g fill="#6a6f75"><rect x="1813" y="1126" width="15" height="12"/><rect x="1818" y="1123" width="10" height="3"/></g><path d="M1818 1123v15M1823 1123v15M1813 1130h15M1813 1134h15" stroke="#e0e2e5"/>
<path d="M1841 1138v-8h4v-6h8v14z" fill="#e8e8e8" stroke="#444" stroke-width="1.300"/><circle cx="1855" cy="1136" r="2" fill="#fff" stroke="#444"/>
<path d="M1868 1124l6 6 7-7 2 2-9 9-6-6z" fill="#555"/><path d="M1868 1134h15v4h-15z" fill="#666"/>
<g fill="#a7abaf"><rect x="1905" y="1130" width="3" height="3"/><rect x="1900" y="1135" width="3" height="3"/><rect x="1905" y="1135" width="3" height="3"/><rect x="1895" y="1140" width="3" height="3"/><rect x="1900" y="1140" width="3" height="3"/><rect x="1905" y="1140" width="3" height="3"/></g>
</svg>
</body></html>
